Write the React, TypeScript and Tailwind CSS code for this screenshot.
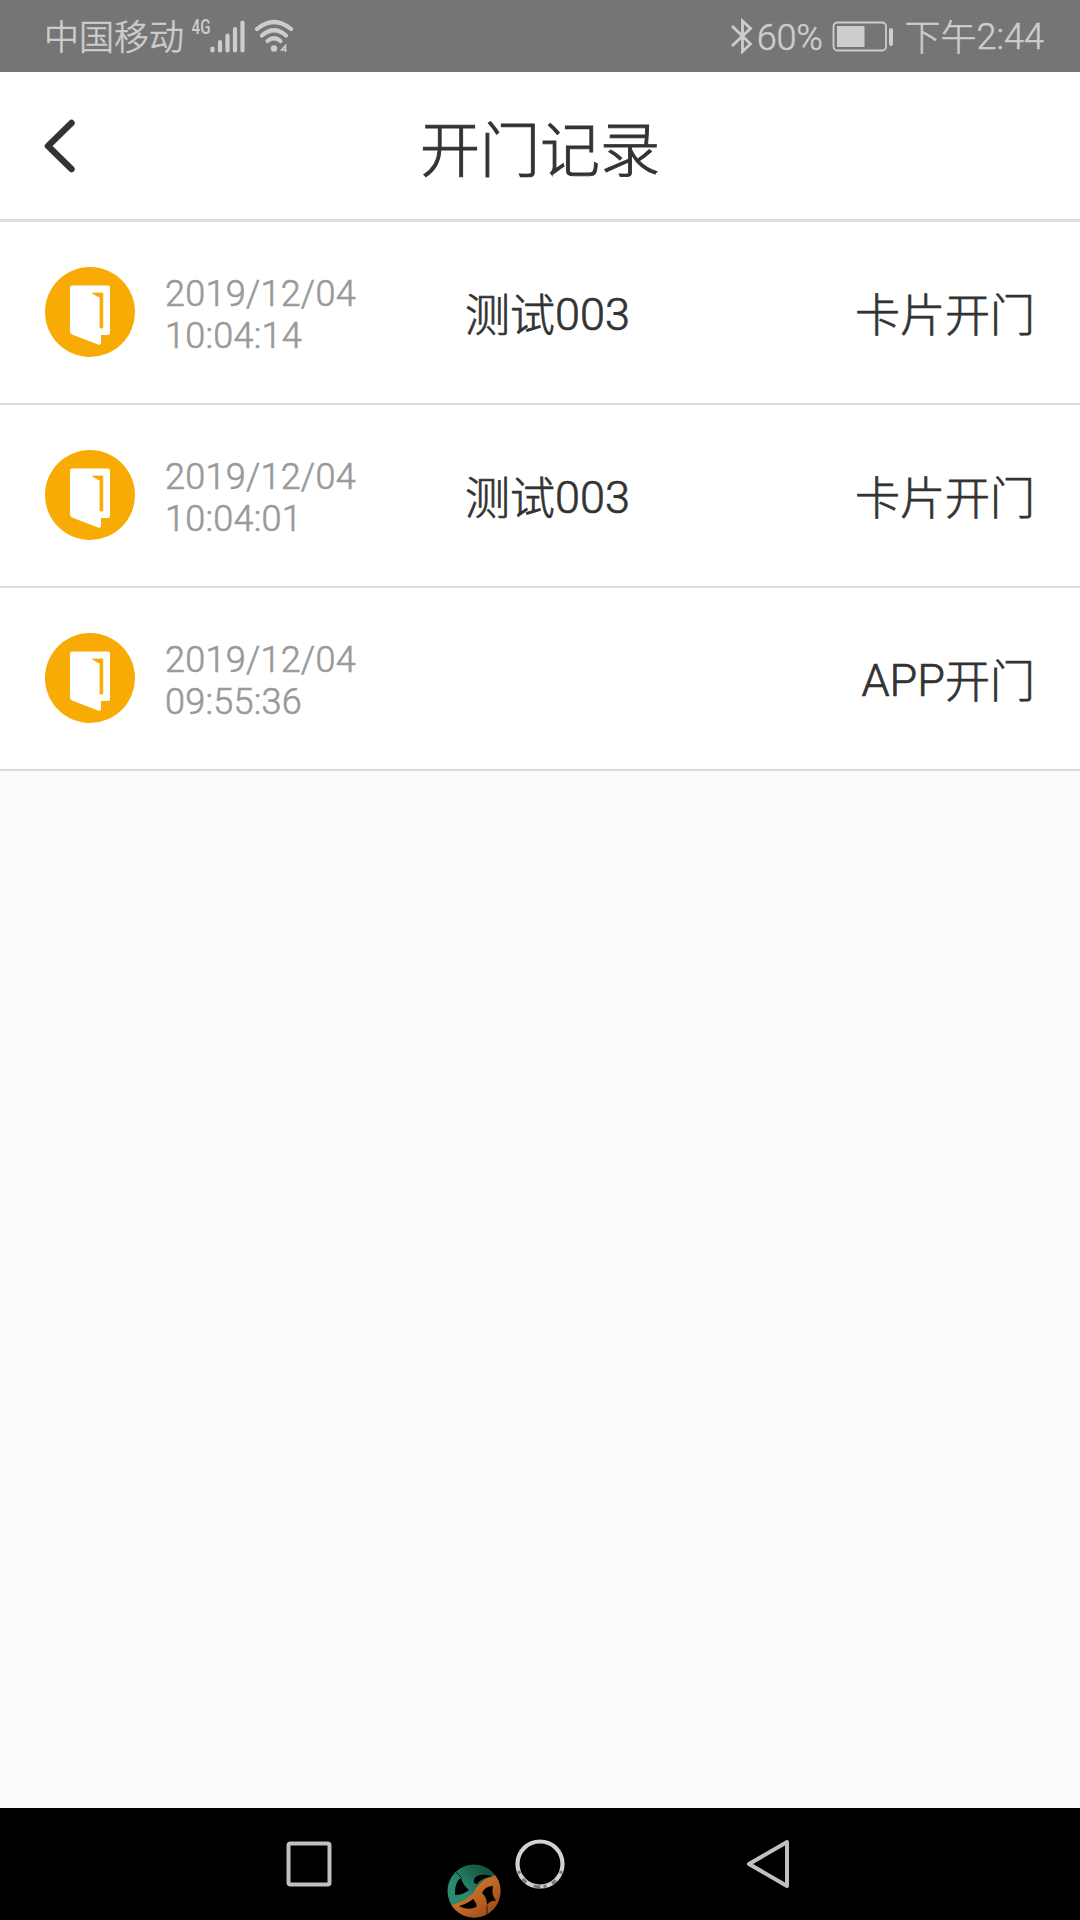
import type { ReactNode } from 'react';

const records = [
  { date: '2019/12/04', time: '10:04:14', name: ['测试', '003'], type: ['', '卡片开门'] },
  { date: '2019/12/04', time: '10:04:01', name: ['测试', '003'], type: ['', '卡片开门'] },
  { date: '2019/12/04', time: '09:55:36', name: ['', ''], type: ['APP', '开门'] },
];

/* Chinese glyphs sit slightly lower than the Latin baseline. */
function Han({ children }: { children: ReactNode }) {
  return <span className="align-[-2px]">{children}</span>;
}

function DoorIcon() {
  return (
    <svg className="mb-[2px] h-[90px] w-[90px] shrink-0" viewBox="0 0 90 90">
      <circle cx="45" cy="45" r="45" fill="#f8ab05" />
      <path d="M27 18.500H63Q65 18.500 65 20.500V66Q65 68 63 68H56V76Q55.500 78.500 53 77.500L27 67.500Q25 66.500 25 64.500V20.500Q25 18.500 27 18.500Z" fill="#fff" />
      <path d="M47.500 26H57.800V61H55V30Q51 29 47.500 26Z" fill="#f8ab05" stroke="#f8ab05" strokeWidth="0.800" />
    </svg>
  );
}

function StatusBar() {
  return (
    <div className="flex h-[72px] items-center justify-between bg-[#757575] pr-[36px] pl-[44px] text-[#cdcdcd]">
      <div className="flex h-full items-center">
        <span className="mt-[6px] text-[35px] leading-[42px] font-light [-webkit-text-stroke:0.6px_#cdcdcd]">中国移动</span>
        <svg className="ml-[7px] h-[40px] w-[105px]" viewBox="191 15 105 40">
          <text x="191.500" y="33" fontSize="20" fontWeight="500" fill="#cdcdcd" textLength="19" lengthAdjust="spacingAndGlyphs">4G</text>
          <g stroke="#cdcdcd" strokeWidth="4.200" strokeLinecap="round">
            <path d="M212.500 47.500V49.500M220 41V49.500M227.500 34.500V49.500M235 28V49.500M242.500 21.500V49.500" />
            <g fill="none">
              <path d="M257 28Q274 14 291 28" />
              <path d="M262 34.500Q274 24 286 34.500" />
              <path d="M267.500 40Q274 34.500 280.500 40" />
            </g>
          </g>
          <circle cx="274" cy="47.500" r="3.200" fill="#cdcdcd" />
          <path d="M285.500 51V44.500L281.500 49H286.500" fill="none" stroke="#cdcdcd" strokeWidth="1.500" />
        </svg>
      </div>
      <div className="flex h-full items-center font-light [-webkit-text-stroke:0.5px_#cdcdcd]">
        <svg className="h-[36px] w-[23px]" viewBox="728 18 23 36">
          <path d="M730 26L748.500 44L740.500 51.500V21L748.500 28.500L730 46" fill="none" stroke="#cdcdcd" strokeWidth="2.800" />
        </svg>
        <span className="mt-[4px] ml-[4px] text-[36px] leading-[42px] tracking-[-0.300px]">60%</span>
        <svg className="ml-[9px] h-[32px] w-[62px]" viewBox="831 20 62 32">
          <rect x="832.500" y="22.500" width="52.500" height="28" rx="4" fill="none" stroke="#cdcdcd" strokeWidth="1.800" />
          <rect x="836" y="26" width="27.500" height="21" fill="#cdcdcd" />
          <rect x="888" y="28" width="4" height="18" rx="2" fill="#cdcdcd" />
        </svg>
        <span className="mt-[4px] ml-[11px] text-[36px] leading-[42px]"><Han>下午</Han>2:44</span>
      </div>
    </div>
  );
}

function SwirlLogo() {
  return (
    <svg className="absolute top-[56px] left-[447px] h-[54px] w-[54px]" viewBox="0 0 54 54">
      <defs>
        <clipPath id="disc"><circle cx="27" cy="27" r="26.500" /></clipPath>
        <linearGradient id="green" x1="0" y1="1" x2="1" y2="0">
          <stop offset="0.400" stopColor="#2a8a6f" />
          <stop offset="0.800" stopColor="#155342" />
        </linearGradient>
        <linearGradient id="orange" x1="0" y1="0" x2="1" y2="1">
          <stop offset="0.400" stopColor="#c96f28" />
          <stop offset="1" stopColor="#993f10" />
        </linearGradient>
      </defs>
      <g clipPath="url(#disc)">
        <rect width="54" height="54" fill="url(#green)" />
        <path d="M54 10Q38 12 29 24Q24 36 4 41L6 54H54Z" fill="url(#orange)" />
        <path d="M8 29Q8 17 14 14Q16 21 22 26Q16 31 8 31Z" fill="#000" />
        <path d="M27 19Q26 12 33 11Q40 10 45 12.500Q35 13 30 20Z" fill="#000" />
        <path d="M35 29Q38 22 46 22Q44 30 49 37Q44 36 40 41Q40 33 35 29Z" fill="#000" />
        <path d="M12 42Q20 40 26 35Q30 39 29.500 43Q20 47 12 42Z" fill="#000" />
        <path d="M8 7L15 14M40 42V53" fill="none" stroke="#092c24" strokeWidth="1" />
      </g>
    </svg>
  );
}

export default function App() {
  return (
    <div className="flex h-[1920px] w-[1080px] flex-col overflow-hidden bg-[#fbfbfb] font-[Roboto,'Noto_Sans_CJK_SC',sans-serif]">
      <StatusBar />
      <header className="grid h-[150px] grid-cols-[1fr_auto_1fr] items-center border-b-[3px] border-[#dcdcdc] bg-white">
        <svg className="mt-[1px] ml-[43px] h-[54px] w-[32px]" viewBox="0 0 32 54">
          <path d="M28.500 4L5 27L28.500 50" fill="none" stroke="#333" strokeWidth="6.500" strokeLinecap="round" strokeLinejoin="round" />
        </svg>
        <h1 className="mt-[12px] text-[60px] leading-[70px] font-light text-[#333] [-webkit-text-stroke:0.9px_#333]">开门记录</h1>
      </header>
      <main className="flex-1">
        {records.map((r) => (
          <div key={r.time} className="flex h-[183px] items-center border-b-2 border-[#dcdcdc] bg-white px-[45px]">
            <DoorIcon />
            <div className="mt-[4px] ml-[30px] w-[300px] text-[36px] leading-[42px] font-light tracking-[0.250px] text-[#999] [-webkit-text-stroke:0.6px_#999]">
              <div>{r.date}</div>
              <div>{r.time}</div>
            </div>
            <div className="mt-[6px] flex flex-1 items-center justify-between text-[45px] leading-[54px] font-light text-[#333] [-webkit-text-stroke:0.7px_#333]">
              <span><Han>{r.name[0]}</Han>{r.name[1]}</span>
              <span>{r.type[0]}<Han>{r.type[1]}</Han></span>
            </div>
          </div>
        ))}
      </main>
      <nav className="relative h-[112px] bg-black">
        <div className="grid h-full grid-cols-[286px_46px_183px_51px_180px_45px] items-center">
          <svg className="col-start-2 h-[46px] w-[46px]" viewBox="0 0 46 46">
            <rect x="2.500" y="2.500" width="41" height="41" rx="2" fill="none" stroke="#c0c0c0" strokeWidth="4" />
          </svg>
          <svg className="col-start-4 h-[50px] w-[50px]" viewBox="0 0 50 50">
            <circle cx="25" cy="25" r="22.500" fill="none" stroke="#d2d2d2" strokeWidth="4.200" />
            <path d="M3.500 32A22.500 22.500 0 0 0 46.500 32" fill="none" stroke="#777" strokeWidth="3" strokeDasharray="3 6 5 8 7 3" />
          </svg>
          <svg className="col-start-6 h-[50px] w-[45px]" viewBox="0 0 45 50">
            <path d="M41 3L3 25L41 47Z" fill="none" stroke="#c0c0c0" strokeWidth="4" strokeLinejoin="round" />
          </svg>
        </div>
        <SwirlLogo />
      </nav>
    </div>
  );
}
